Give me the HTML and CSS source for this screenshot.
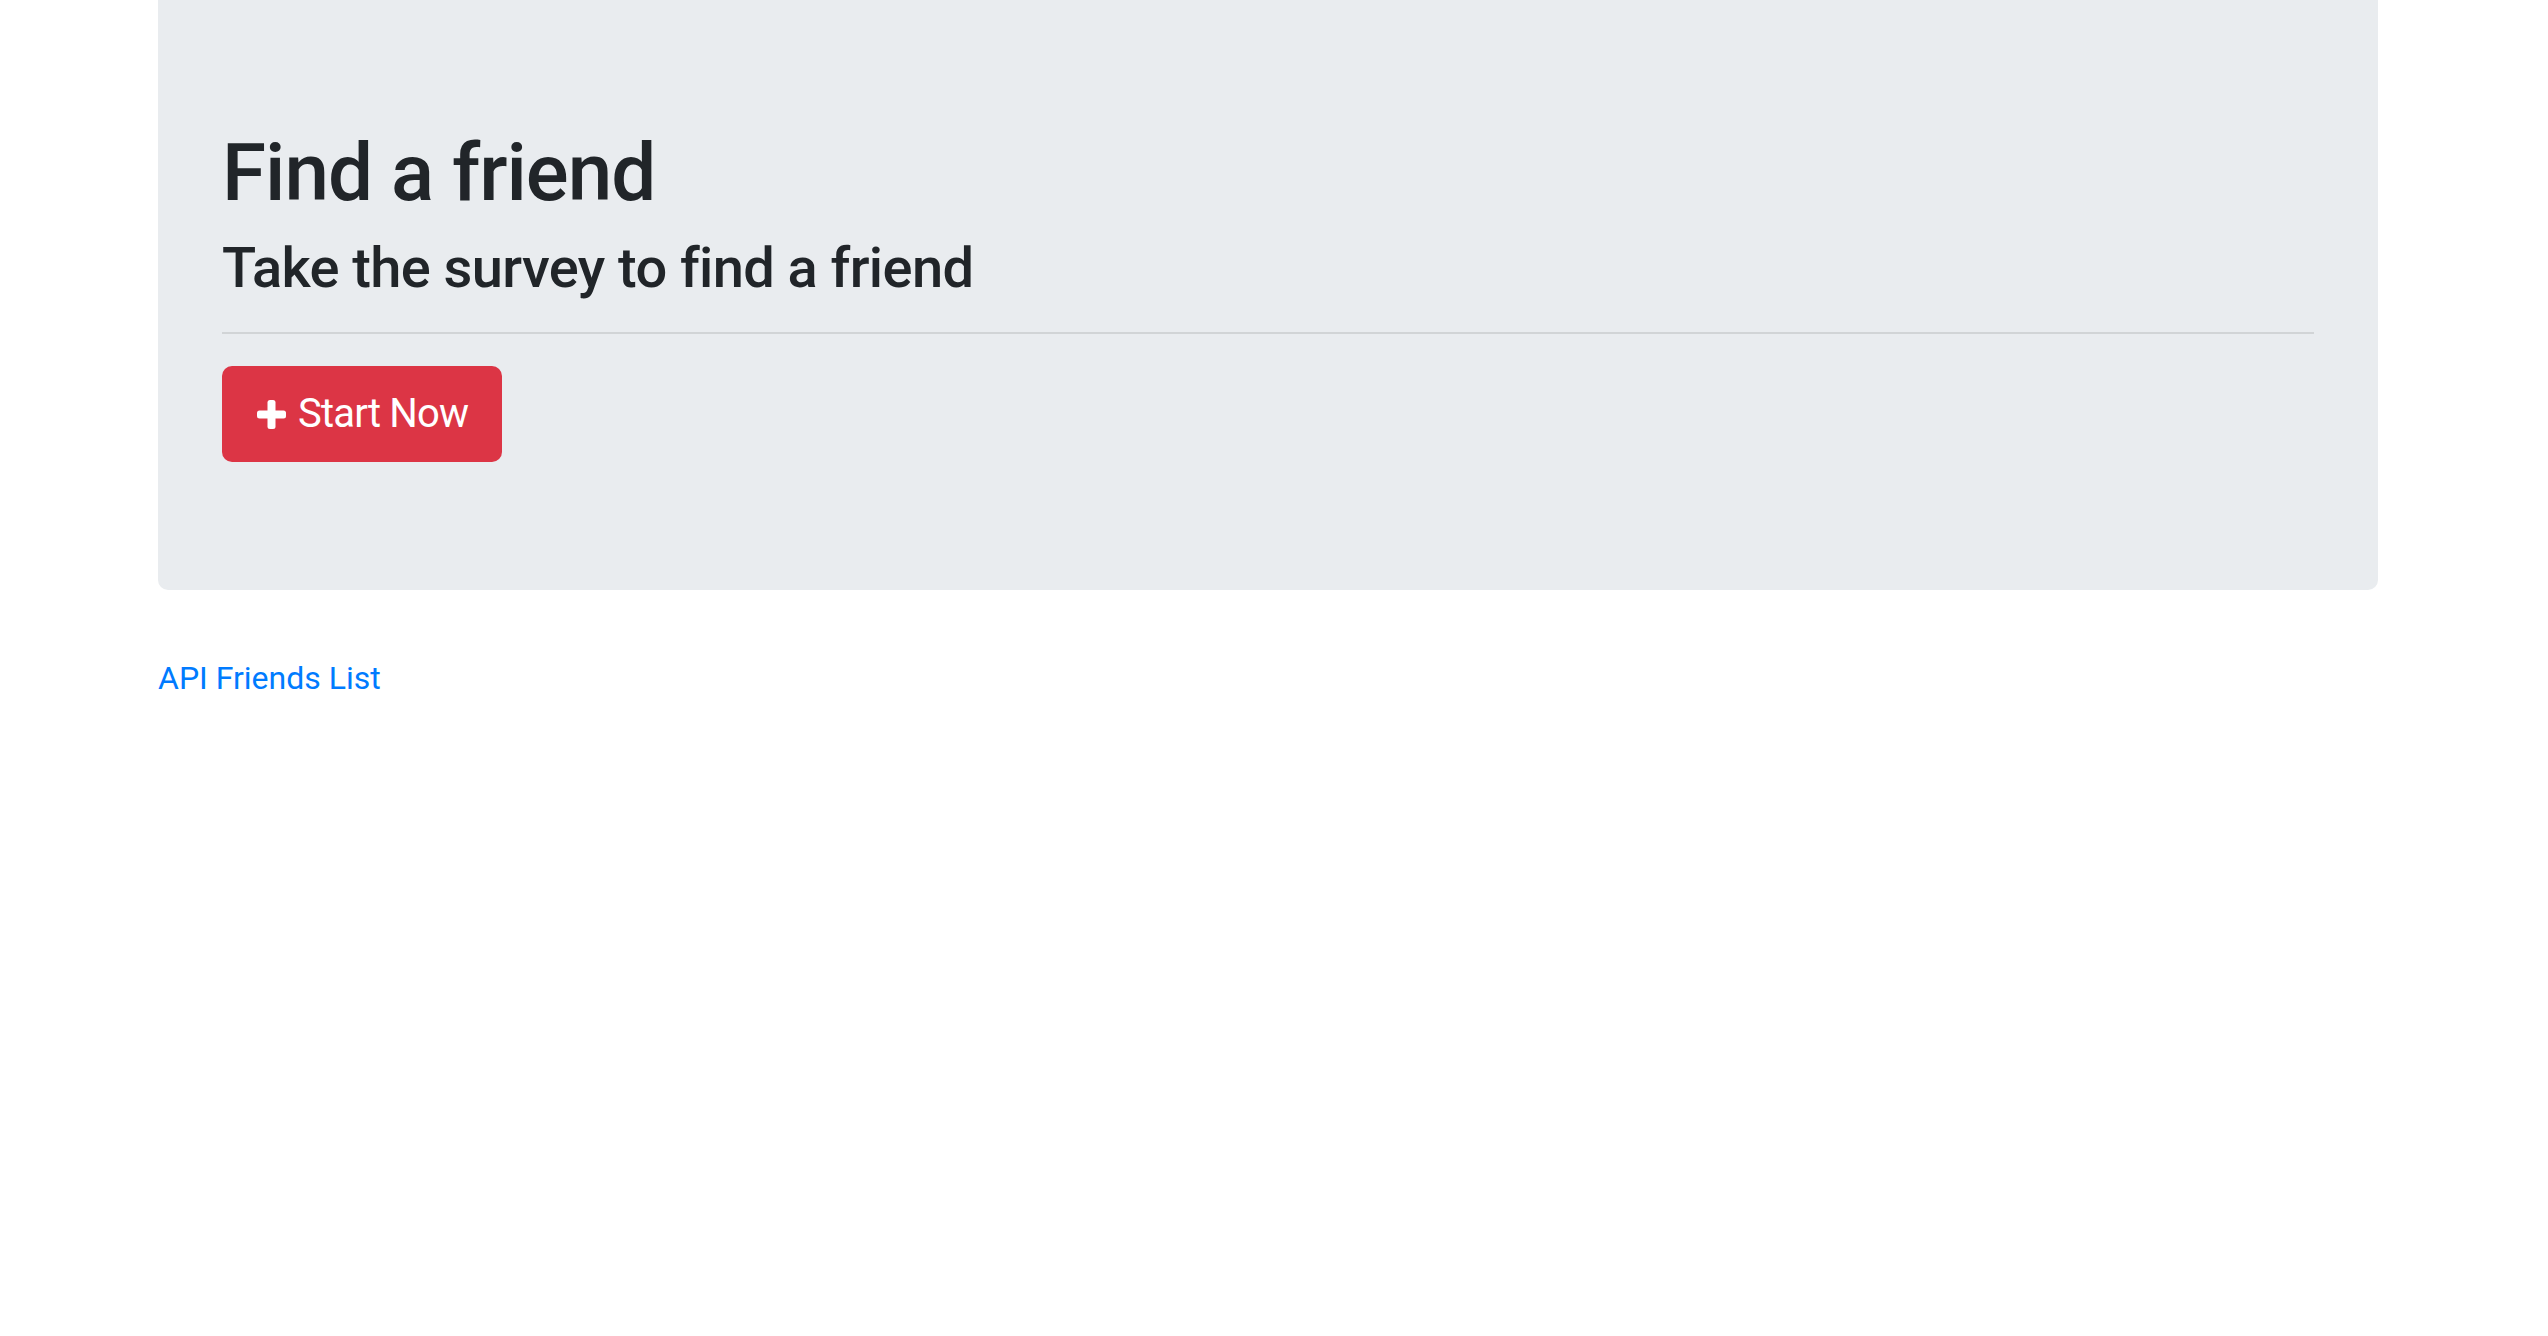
FILE: index.html
```html
<!DOCTYPE html>
<html lang="en">
<head>
<meta charset="utf-8">
<title>Find a friend</title>
<link rel="stylesheet" href="styles.css">
</head>
<body>
<div class="container">
  <div class="jumbotron">
    <h1 class="title">Find a friend</h1>
    <h3 class="subtitle">Take the survey to find a friend</h3>
    <hr class="divider">
    <a class="btn-start" href="#">
      <svg class="plus" width="31" height="31" viewBox="0 0 31 31" aria-hidden="true">
        <rect x="11.5" y="1" width="8" height="29" rx="2.5" fill="#fff"/>
        <rect x="1" y="11.5" width="29" height="8" rx="2.5" fill="#fff"/>
      </svg>
      <span>Start Now</span>
    </a>
  </div>
  <a class="api-link" href="#">API Friends List</a>
</div>
</body>
</html>
```
FILE: styles.css
```css
html, body {
  margin: 0;
  padding: 0;
  background: #fff;
}
body {
  font-family: Roboto, "Liberation Sans", Arial, sans-serif;
  color: #212529;
  font-size: 32px;
  line-height: 1.5;
}
.container {
  width: 2220px;
  margin-left: 158px;
}
.jumbotron {
  background: #e9ecef;
  padding: 125px 64px 128px;
  border-radius: 0 0 10px 10px;
  margin-bottom: 64px;
}
.title {
  font-size: 80px;
  line-height: 96px;
  font-weight: 500;
  margin: 0 0 14px;
  letter-spacing: -1px;
}
.subtitle {
  font-size: 56px;
  line-height: 67px;
  font-weight: 500;
  margin: 0;
  letter-spacing: -0.6px;
}
.divider {
  border: 0;
  border-top: 2px solid rgba(0, 0, 0, 0.1);
  margin: 30px 0 32px;
  height: 0;
}
.btn-start {
  display: inline-flex;
  align-items: center;
  gap: 11px;
  height: 96px;
  box-sizing: border-box;
  padding: 0 34px;
  background: #dc3545;
  color: #fff;
  border-radius: 10px;
  font-size: 40px;
  letter-spacing: -0.8px;
  text-decoration: none;
  vertical-align: top;
}
.plus {
  display: block;
  flex: none;
}
.api-link {
  display: inline-block;
  color: #007bff;
  text-decoration: none;
  font-size: 32px;
  line-height: 48px;
}
```
